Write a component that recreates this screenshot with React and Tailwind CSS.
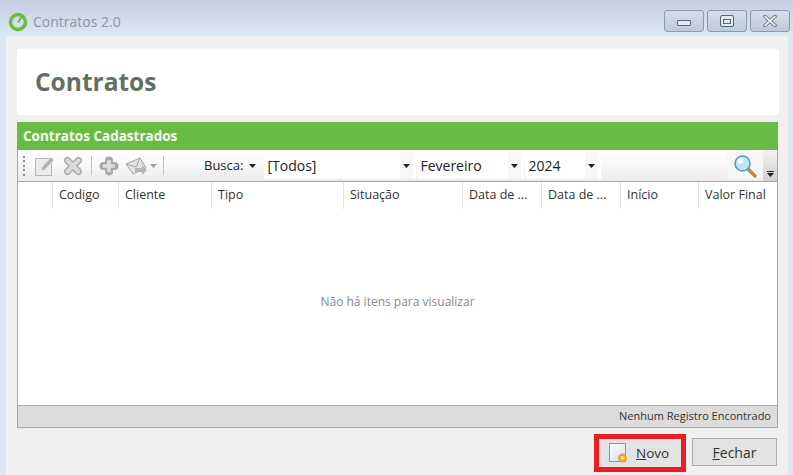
import React from "react";

const columns = [
  { label: "", w: "w-[35px]" },
  { label: "Codigo", w: "w-[66px]" },
  { label: "Cliente", w: "w-[93px]" },
  { label: "Tipo", w: "w-[132px]" },
  { label: "Situação", w: "w-[119px]" },
  { label: "Data de ...", w: "w-[79px]" },
  { label: "Data de ...", w: "w-[79px]" },
  { label: "Início", w: "w-[78px]" },
  { label: "Valor Final", w: "flex-1" },
];

function Caret({ className = "" }) {
  return (
    <svg width="7" height="4" viewBox="0 0 7 4" className={className}>
      <path d="M0 0h7L3.5 4z" fill="#222" />
    </svg>
  );
}

function WindowButton({ children }) {
  return (
    <div className="w-[40px] h-[22px] rounded-[3px] border border-[#8a9bb0] bg-gradient-to-b from-[#d5dfea] to-[#bccadb] flex items-center justify-center">
      {children}
    </div>
  );
}

function Combo({ label, w }) {
  return (
    <div className={`${w} h-[27px] bg-white flex items-center justify-between pl-[3px] pr-[3px] text-[14px] text-[#222]`}>
      <span>{label}</span>
      <span className="w-[13px] h-[27px] flex items-center justify-center bg-[#f7f7f7]">
        <Caret />
      </span>
    </div>
  );
}

export default function App() {
  return (
    <div className="w-[793px] h-[475px] overflow-hidden bg-[#d9e6f3] font-['Open_Sans','Liberation_Sans',sans-serif] flex flex-col">
      {/* title bar */}
      <div className="h-[36px] shrink-0 bg-gradient-to-b from-[#c3cfdf] to-[#dce8f4] flex items-start pl-[8px] pr-[3px]">
        <svg width="20" height="20" viewBox="0 0 20 20" className="mt-[12px] shrink-0">
          <circle cx="10" cy="10" r="7.5" fill="none" stroke="#6dbb45" strokeWidth="3.5" />
          <path d="M10 10.5l4-6" stroke="#6dbb45" strokeWidth="2" />
        </svg>
        <span className="ml-[5px] mt-[12px] text-[14px] leading-[20px] text-[#8f979f]">Contratos 2.0</span>
        <div className="ml-auto mt-[10px] flex gap-[3px]">
          <WindowButton>
            <div className="w-[14px] h-[6px] mt-[4px] rounded-[1px] border border-[#5a6675] bg-[#e4e9ef]" />
          </WindowButton>
          <WindowButton>
            <div className="w-[14px] h-[12px] rounded-[2px] border border-[#5a6675] bg-[#e4e9ef] flex items-center justify-center">
              <div className="w-[8px] h-[5px] border border-[#5a6675]" />
            </div>
          </WindowButton>
          <WindowButton>
            <svg width="16" height="12" viewBox="0 0 16 12">
              <path d="M3 1.5l10 9M13 1.5l-10 9" stroke="#5a6675" strokeWidth="3.4" strokeLinecap="round" />
              <path d="M3 1.5l10 9M13 1.5l-10 9" stroke="#eef1f5" strokeWidth="1.8" strokeLinecap="round" />
            </svg>
          </WindowButton>
        </div>
      </div>

      {/* window body */}
      <div className="ml-[6px] w-[782px] flex-1 bg-[#f0f0f0] pl-[11px] pr-[8px] pt-[13px] flex flex-col">
        <div className="w-[762px] h-[66px] shrink-0 bg-white flex items-center pl-[18px]">
          <h1 className="text-[24.5px] font-bold leading-none text-[#64705f]">Contratos</h1>
        </div>

        <div className="mt-[7px] w-[761px] h-[284px] shrink-0 flex flex-col">
          <div className="h-[28px] shrink-0 bg-[#6abb46] flex items-center pl-[6px] text-[13.5px] font-bold text-[#f4fbef]">
            Contratos Cadastrados
          </div>

          {/* toolbar */}
          <div className="h-[31px] shrink-0 bg-gradient-to-b from-white via-[#f8f8f8] to-[#ebebeb] flex items-center pl-[5px] border-x border-[#a8a8a8]">
            <div className="w-[3px] h-[20px] flex flex-col justify-between">
              {[0, 1, 2, 3, 4].map((i) => (
                <span key={i} className="w-[2px] h-[2px] bg-[#8f8f8f]" />
              ))}
            </div>
            {/* edit */}
            <svg width="20" height="20" viewBox="0 0 20 20" className="ml-[9px]">
              <rect x="0.5" y="2.5" width="16" height="17" fill="#ececec" stroke="#b8b8b8" />
              <path d="M6 15l1-4 9-10 3 3-9 9.5z" fill="#b0b0b0" stroke="#f4f4f4" strokeWidth="0.6" />
            </svg>
            {/* delete */}
            <svg width="20" height="20" viewBox="0 0 20 20" className="ml-[8px]">
              <path d="M4.5 4.5l11 11M15.5 4.5l-11 11" stroke="#aaaaaa" strokeWidth="7" strokeLinecap="round" />
              <path d="M4.5 4.5l11 11M15.5 4.5l-11 11" stroke="#dadada" strokeWidth="4" strokeLinecap="round" />
            </svg>
            <div className="ml-[8px] w-px h-[19px] bg-[#c4c4c4]" />
            {/* add */}
            <svg width="20" height="20" viewBox="0 0 20 20" className="ml-[7px]">
              <path d="M10 4.5v11M4.5 10h11" stroke="#a9a9a9" strokeWidth="8" strokeLinecap="round" />
              <path d="M10 4v12M4 10h12" stroke="#dddddd" strokeWidth="3.5" />
            </svg>
            {/* send */}
            <svg width="24" height="20" viewBox="0 0 24 20" className="ml-[6px]">
              <path d="M1 8l14-6 6 10-13 6z" fill="#e2e2e2" stroke="#a8a8a8" />
              <path d="M1 8l10 3 4-9" fill="none" stroke="#a8a8a8" />
              <path d="M10 12h7V9l5 5-5 5v-3h-7z" fill="#b5b5b5" />
            </svg>
            <Caret className="ml-[1px] opacity-40" />
            <div className="ml-[6px] w-px h-[19px] bg-[#c4c4c4]" />

            <span className="ml-[40px] text-[13px] text-[#222]">Busca:</span>
            <Caret className="ml-[6px]" />
            <div className="ml-[8px] flex gap-[1px]">
              <Combo label="[Todos]" w="w-[152px]" />
              <Combo label="Fevereiro" w="w-[107px]" />
              <Combo label="2024" w="w-[76px]" />
            </div>

            {/* search */}
            <div className="ml-auto h-[27px] w-[36px] bg-[#f6f6f6] flex items-center justify-center">
              <svg width="24" height="24" viewBox="0 0 24 24">
                <path d="M15 15l7 7" stroke="#c08a3e" strokeWidth="3.5" strokeLinecap="round" />
                <circle cx="9.5" cy="9.5" r="7.5" fill="#bfe6f7" stroke="#5a9cc4" strokeWidth="1.6" />
                <circle cx="7.5" cy="7" r="3" fill="#eef9fe" />
              </svg>
            </div>
            <div className="w-[14px] h-[31px] flex flex-col items-center justify-end pb-[4px] bg-gradient-to-b from-[#f4f4f4] to-[#cfcfcf]">
              <span className="w-[7px] h-px bg-[#222] mb-[1px]" />
              <Caret />
            </div>
          </div>

          {/* grid */}
          <div className="flex-1 min-h-0 bg-white border border-[#a8a8a8] flex flex-col">
            <div className="h-[27px] shrink-0 flex">
              {columns.map((col, i) => (
                <div
                  key={i}
                  className={`${col.w} border-r border-[#e4e4e4] last:border-r-0 pl-[6px] flex items-center text-[12.5px] text-[#333] whitespace-nowrap overflow-hidden`}
                >
                  {col.label}
                </div>
              ))}
            </div>
            <div className="flex-1 flex items-center justify-center pb-[11px] text-[12px] text-[#888]">
              Não há itens para visualizar
            </div>
          </div>
        </div>

        {/* status */}
        <div className="w-[761px] h-[22px] shrink-0 bg-[#dcdcdc] border-x border-b border-[#a8a8a8] flex items-center justify-end pr-[6px] text-[11px] text-[#333]">
          Nenhum Registro Encontrado
        </div>

        {/* buttons */}
        <div className="mt-[6px] w-[762px] flex justify-end items-start gap-[6px]">
          <div className="border-[5px] border-[#ec1c24]">
            <button className="w-[82px] h-[28px] bg-[#e3e3e3] flex items-center pl-[9px] text-[13.5px] text-[#333]">
              <svg width="20" height="20" viewBox="0 0 20 20" className="shrink-0">
                <defs>
                  <linearGradient id="novoDoc" x1="0" y1="0" x2="1" y2="1">
                    <stop offset="0" stopColor="#ffffff" />
                    <stop offset="1" stopColor="#cfdcec" />
                  </linearGradient>
                </defs>
                <rect x="1.5" y="0.5" width="16" height="18" fill="url(#novoDoc)" stroke="#7f9cc0" />
                <circle cx="14.5" cy="15" r="4.5" fill="#f0a030" />
                <circle cx="14.5" cy="15" r="2" fill="#fbd98a" />
              </svg>
              <span className="ml-[8px]"><span className="underline">N</span>ovo</span>
            </button>
          </div>
          <button className="mt-[4px] mr-[2px] w-[85px] h-[28px] bg-[#e3e3e3] border border-[#adadad] text-[14px] text-[#333]">
            <span className="underline">F</span>echar
          </button>
        </div>
      </div>
    </div>
  );
}
